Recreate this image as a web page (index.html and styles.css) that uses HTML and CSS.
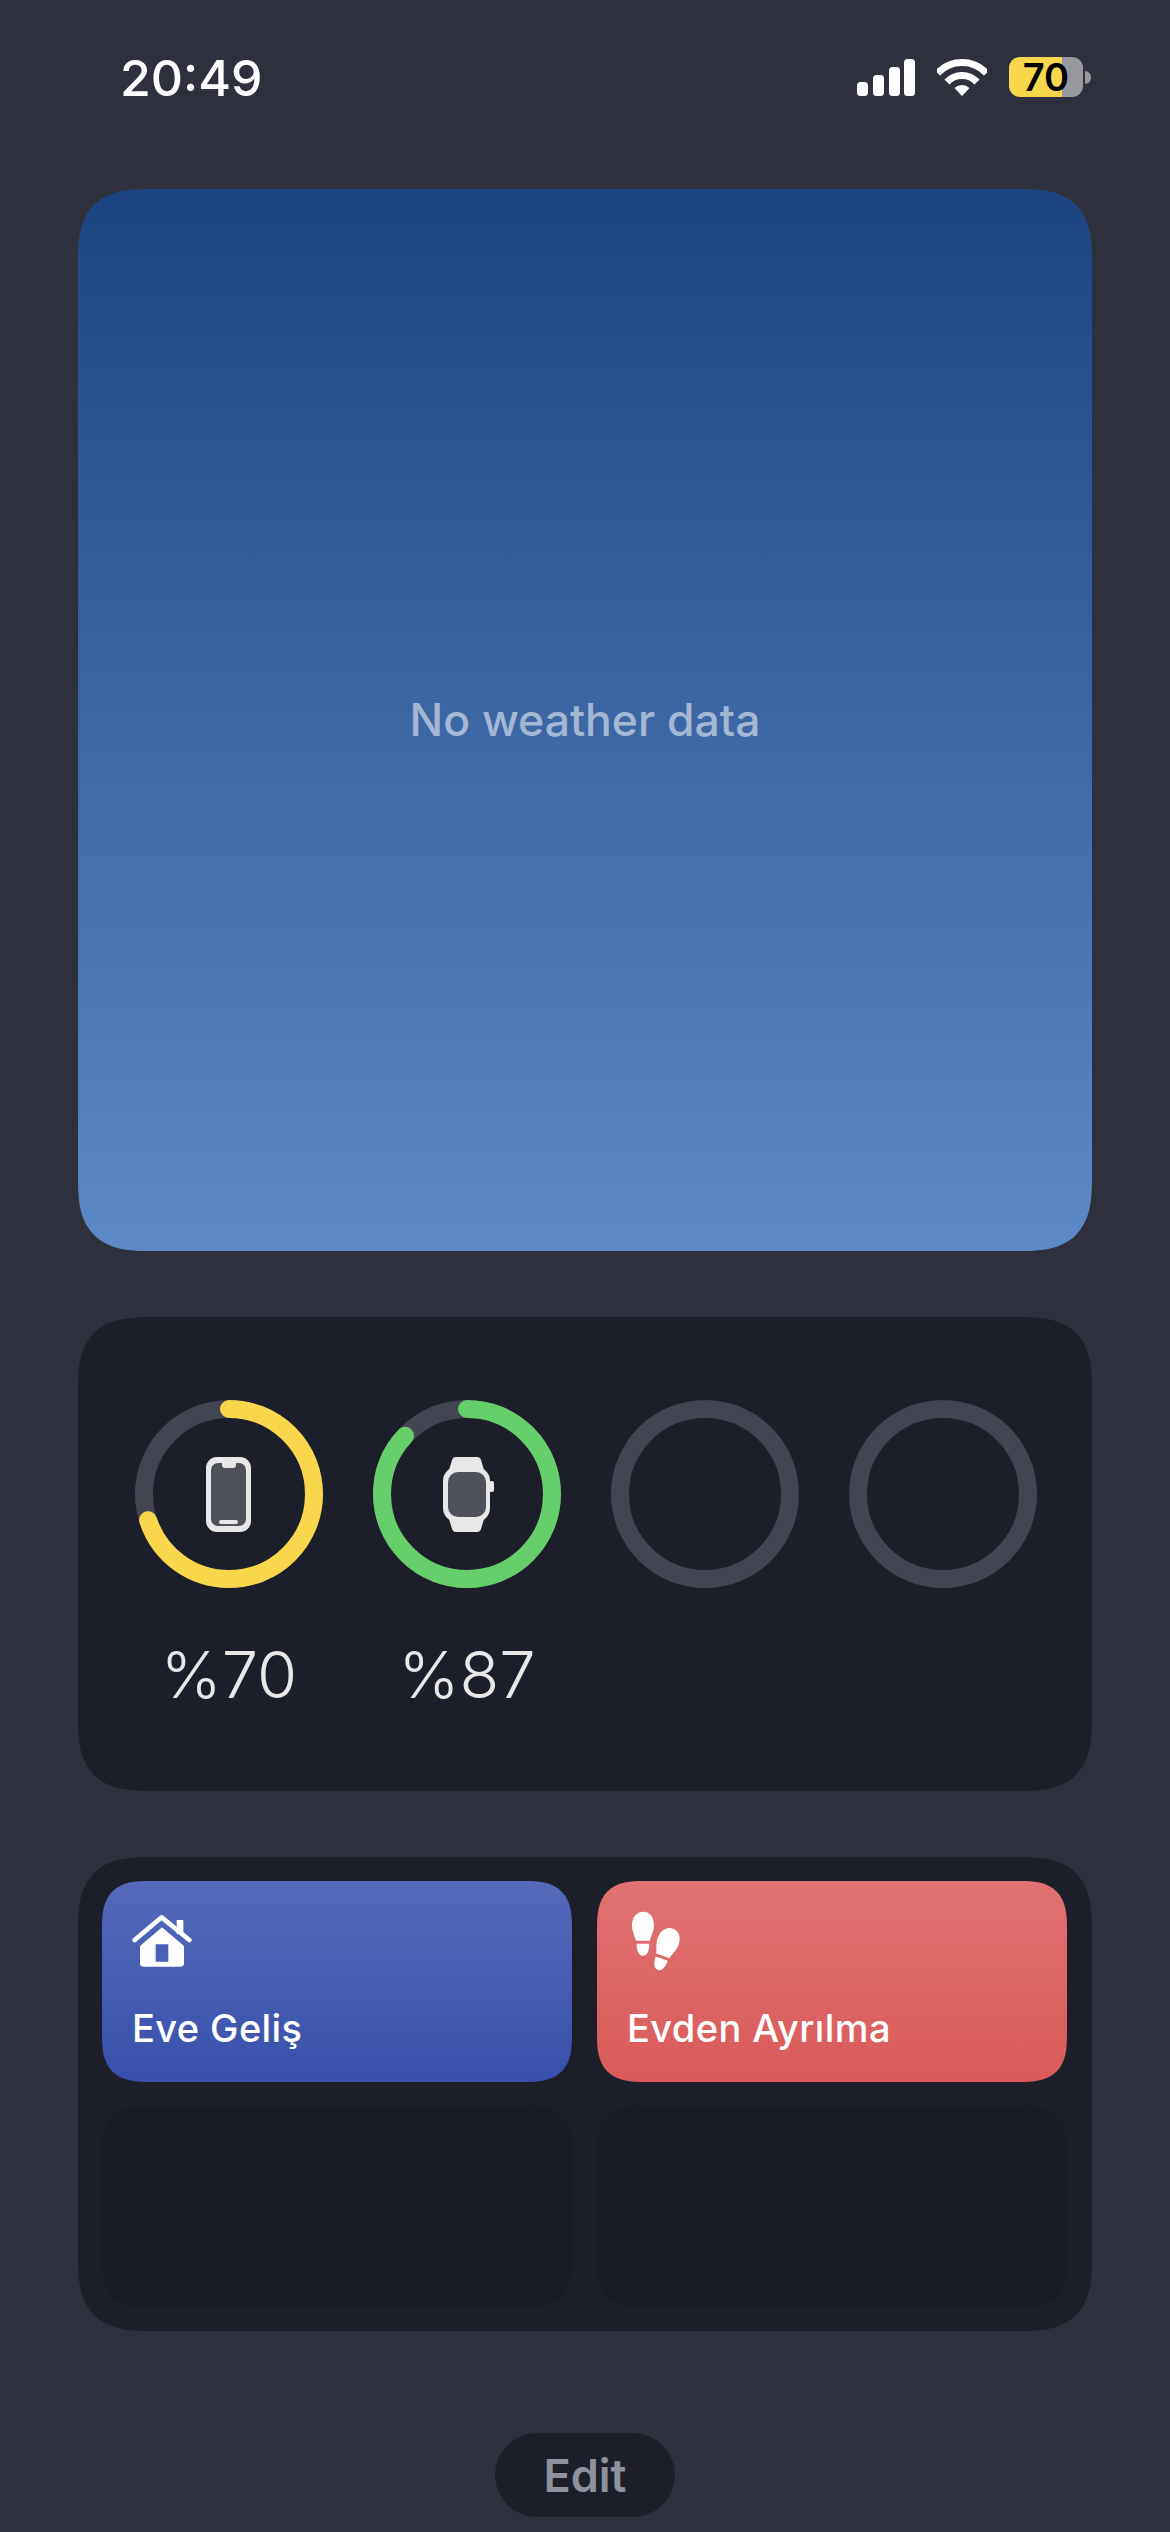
FILE: index.html
```html
<!DOCTYPE html>
<html lang="en">
<head>
    <meta charset="UTF-8">
    <meta name="viewport" content="width=device-width, initial-scale=1.0">
    <title>Widgets</title>
    <link rel="stylesheet" href="styles.css">
</head>
<body>
    <!-- Status bar -->
    <header class="status-bar">
        <span class="time">20:49</span>
        <div class="status-icons">
            <svg class="signal" width="58" height="37" viewBox="0 0 58 37">
                <rect x="0" y="23" width="11" height="14" rx="3.5"/>
                <rect x="16" y="16" width="11" height="21" rx="3.5"/>
                <rect x="32" y="8" width="11" height="29" rx="3.5"/>
                <rect x="47" y="0" width="11" height="37" rx="3.5"/>
            </svg>
            <svg class="wifi" width="50" height="37" viewBox="0 0 50 37">
                <path class="wifi-arc" d="M.5 14.2A33.5 33.5 0 0 1 49.5 14.2"/>
                <path class="wifi-arc" d="M10 23A20.5 20.5 0 0 1 40 23"/>
                <path d="M25 37L17.5 29A11 11 0 0 1 32.5 29Z"/>
            </svg>
            <div class="battery">
                <span class="battery-level">70</span>
                <span class="battery-cap"></span>
            </div>
        </div>
    </header>

    <main class="widgets">
        <!-- Weather -->
        <section class="card weather-card">
            <p class="weather-empty">No weather data</p>
        </section>

        <!-- Batteries -->
        <section class="card battery-card">
            <div class="device">
                <svg class="ring" width="188" height="188" viewBox="0 0 188 188">
                    <circle class="ring-track" cx="94" cy="94" r="85"/>
                    <circle class="ring-value ring-yellow" cx="94" cy="94" r="85" pathLength="100" stroke-dasharray="70 100"/>
                    <rect x="71" y="57" width="45" height="75" rx="11" fill="#e8e8e8"/>
                    <rect x="76" y="63" width="35" height="63" rx="7" fill="#4e505a"/>
                    <path d="M87 62h14v3q0 3-3 3h-8q-3 0-3-3z" fill="#e8e8e8"/>
                    <rect x="84" y="120" width="19" height="4" rx="2" fill="#e8e8e8"/>
                </svg>
                <span class="device-level">%70</span>
            </div>
            <div class="device">
                <svg class="ring" width="188" height="188" viewBox="0 0 188 188">
                    <circle class="ring-track" cx="94" cy="94" r="85"/>
                    <circle class="ring-value ring-green" cx="94" cy="94" r="85" pathLength="100" stroke-dasharray="87 100"/>
                    <path d="M83 57H104Q107 57 108 60L111 70H76L79 60Q80 57 83 57Z" fill="#e8e8e8"/>
                    <path d="M83 132H104Q107 132 108 129L111 119H76L79 129Q80 132 83 132Z" fill="#e8e8e8"/>
                    <rect x="70" y="67" width="47" height="55" rx="14" fill="#e8e8e8"/>
                    <rect x="116" y="81" width="5" height="11" rx="2" fill="#e8e8e8"/>
                    <rect x="75" y="72" width="38" height="45" rx="10" fill="#4e505a"/>
                </svg>
                <span class="device-level">%87</span>
            </div>
            <div class="device">
                <svg class="ring" width="188" height="188" viewBox="0 0 188 188">
                    <circle class="ring-track" cx="94" cy="94" r="85"/>
                </svg>
            </div>
            <div class="device">
                <svg class="ring" width="188" height="188" viewBox="0 0 188 188">
                    <circle class="ring-track" cx="94" cy="94" r="85"/>
                </svg>
            </div>
        </section>

        <!-- Shortcuts -->
        <section class="card shortcuts-card">
            <div class="tile tile-blue">
                <svg class="tile-icon" width="60" height="60" viewBox="36 33 180 180">
                    <path d="M170 62q0-2 2-2h16q2 0 2 2v40h-20z" fill="#fff"/>
                    <path d="M44 120L125 52L208 120" fill="none" stroke="#fff" stroke-width="14" stroke-linecap="round" stroke-linejoin="round"/>
                    <path fill-rule="evenodd" fill="#fff" d="M126 82L192 138V190Q192 200 182 200H70Q60 200 60 190V138ZM107 133V185H145V133Z"/>
                </svg>
                <span class="tile-label">Eve Geliş</span>
            </div>
            <div class="tile tile-red">
                <svg class="tile-icon" width="60" height="60" viewBox="21 33 180 180">
                    <g fill="#fff">
                        <path d="M70 35C50 35 36 52 36 75C36 95 45 110 48 122L90 122C92 110 102 95 102 75C102 52 90 35 70 35Z"/>
                        <path d="M50 131L88 131C88 152 82 167 68 167C55 167 50 150 50 131Z"/>
                    </g>
                    <g fill="#fff" transform="translate(74 48) rotate(20 69 80)">
                        <path d="M70 35C50 35 36 52 36 75C36 95 45 110 48 122L90 122C92 110 102 95 102 75C102 52 90 35 70 35Z"/>
                        <path d="M50 131L88 131C88 152 82 167 68 167C55 167 50 150 50 131Z"/>
                    </g>
                </svg>
                <span class="tile-label">Evden Ayrılma</span>
            </div>
            <div class="tile tile-empty"></div>
            <div class="tile tile-empty"></div>
        </section>
    </main>

    <div class="edit-row">
        <button type="button" class="edit-button">Edit</button>
    </div>
</body>
</html>
```

FILE: styles.css
```css
* {
    box-sizing: border-box;
}

body {
    font-family: Inter, "Noto Sans", sans-serif;
    margin: 0;
    padding: 0;
    background-color: #2e313d;
    color: #fff;
}

.status-bar {
    display: flex;
    justify-content: space-between;
    align-items: flex-start;
    height: 189px;
    padding: 52px 79px 0 120px;
}

.time {
    font-size: 50px;
    font-weight: 500;
    line-height: 52px;
}

.status-icons {
    display: flex;
    align-items: center;
    gap: 22px;
    padding-top: 5px;
}

.signal,
.wifi {
    fill: #fff;
}

.wifi-arc {
    fill: none;
    stroke: #fff;
    stroke-width: 7;
}

.battery {
    display: flex;
    align-items: center;
    gap: 2px;
}

.battery-level {
    width: 74px;
    height: 40px;
    border-radius: 11px;
    background: linear-gradient(90deg, #f9d74c 72%, #98989f 72%);
    color: #000;
    font-size: 38px;
    font-weight: 600;
    line-height: 40px;
    text-align: center;
}

.battery-cap {
    width: 6px;
    height: 13px;
    border-radius: 0 6px 6px 0;
    background-color: #98989f;
}

.widgets {
    display: flex;
    flex-direction: column;
    gap: 66px;
    padding: 0 78px;
}

.card {
    border-radius: 74px;
    corner-shape: superellipse(1.5);
    background-color: #1c1e29;
}

.weather-card {
    display: flex;
    align-items: center;
    justify-content: center;
    height: 1062px;
    background: linear-gradient(180deg, #1c4480, #5d89c7);
}

.weather-empty {
    margin: 0;
    font-size: 44.5px;
    font-weight: 500;
    color: rgba(255, 255, 255, 0.55);
}

.battery-card {
    display: grid;
    grid-template-columns: repeat(4, 238px);
    height: 474px;
    padding: 83px 0 0 32px;
}

.device {
    display: flex;
    flex-direction: column;
    align-items: center;
    gap: 47px;
}

.ring {
    display: block;
}

.ring-track,
.ring-value {
    fill: none;
    stroke-width: 18;
}

.ring-track {
    stroke: #434652;
}

.ring-value {
    stroke-linecap: round;
    transform: rotate(-90deg);
    transform-origin: 94px 94px;
}

.ring-yellow {
    stroke: #f9d74c;
}

.ring-green {
    stroke: #66ce6b;
}

.device-level {
    font-size: 65px;
    font-weight: 300;
    line-height: 80px;
    color: #e8e8e8;
}

.shortcuts-card {
    display: grid;
    grid-template-columns: 470px 470px;
    grid-auto-rows: 201px;
    column-gap: 25px;
    row-gap: 24px;
    height: 474px;
    padding: 24px;
}

.tile {
    display: flex;
    flex-direction: column;
    align-items: flex-start;
    padding: 30px 30px 0;
    border-radius: 48px;
    corner-shape: superellipse(1.5);
}

.tile-blue {
    background: linear-gradient(180deg, #5469b9, #3850ab);
}

.tile-red {
    background: linear-gradient(180deg, #e07272, #da5a5a);
}

.tile-empty {
    background-color: #191b26;
}

.tile-icon {
    display: block;
}

.tile-label {
    margin-top: 35px;
    font-size: 38px;
    font-weight: 500;
    letter-spacing: 0.4px;
    line-height: 44px;
}

.edit-row {
    display: flex;
    justify-content: center;
    padding-top: 102px;
}

.edit-button {
    width: 180px;
    height: 84px;
    border: none;
    border-radius: 42px;
    background-color: #1c1e29;
    color: #8e919e;
    font-family: Inter, "Noto Sans", sans-serif;
    font-size: 45px;
    font-weight: 600;
}
```
